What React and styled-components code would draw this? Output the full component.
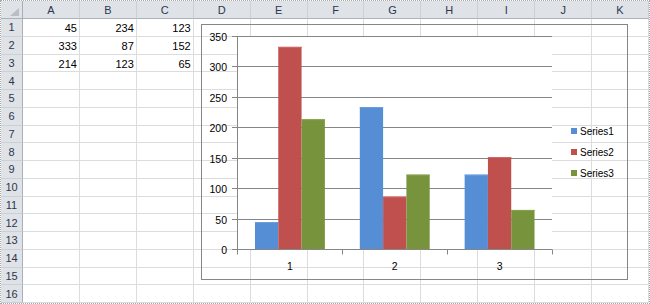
import React from "react";
import styled, { createGlobalStyle } from "styled-components";

const columns = ["A", "B", "C", "D", "E", "F", "G", "H", "I", "J", "K"];
const ROW_COUNT = 16;

// rows 1-3 of the sheet, columns A-C
const data = [
  [45, 234, 123],
  [333, 87, 152],
  [214, 123, 65],
];

const series = [
  { name: "Series1", color: "#558ED5", edge: "#6C9EDD" },
  { name: "Series2", color: "#C0504D", edge: "#CD6A67" },
  { name: "Series3", color: "#77933C", edge: "#87A34C" },
];

const plot = { left: 35.5, right: 350, top: 11.5, bottom: 224.5, max: 350 };
const ticks = [0, 50, 100, 150, 200, 250, 300, 350];
const yFor = (v) => plot.bottom - (v / plot.max) * (plot.bottom - plot.top);
const snap = (y) => Math.round(y - 0.5) + 0.5;

const GlobalStyle = createGlobalStyle`
  html, body {
    margin: 0;
    padding: 0;
    background: #ffffff;
  }
  body {
    font-family: "Liberation Sans", Arial, sans-serif;
  }
`;

const Sheet = styled.div`
  position: relative;
  box-sizing: border-box;
  width: 650px;
  height: 304px;
  border: 1px dotted #a8a8a8;
  display: grid;
  grid-template-columns: 22px repeat(${columns.length}, 1fr);
  grid-template-rows: 18px repeat(${ROW_COUNT}, 1fr);
  overflow: hidden;
  background: #ffffff;
  font-size: 11px;
`;

const HeaderBase = styled.div`
  box-sizing: border-box;
  background: #dfe3e8;
  color: #2c374c;
  display: flex;
  align-items: center;
  justify-content: center;
  line-height: 1;
`;

const Corner = styled(HeaderBase)`
  border-right: 1px solid #a9b0b8;
  border-bottom: 1px solid #a9b0b8;
  justify-content: flex-end;
  align-items: flex-end;
  padding: 0 3px 2px 0;
`;

const CornerMark = styled.span`
  width: 9px;
  height: 8px;
  background: #b9bec5;
  clip-path: polygon(100% 0, 100% 100%, 0 100%);
`;

const ColHeader = styled(HeaderBase)`
  border-right: 1px solid #cbd0d6;
  border-bottom: 1px solid #a9b0b8;
  padding-top: 1px;
`;

const RowHeader = styled(HeaderBase)`
  border-right: 1px solid #a9b0b8;
  border-bottom: 1px solid #cbd0d6;
  padding-top: 1px;
`;

const Cell = styled.div`
  box-sizing: border-box;
  border-right: 1px solid #dadcdd;
  border-bottom: 1px solid #dadcdd;
  display: flex;
  align-items: flex-end;
  justify-content: flex-end;
  padding: 0 2px 1px 0;
  color: #000000;
  line-height: 1.15;
`;

const ChartBox = styled.div`
  position: absolute;
  left: 200px;
  top: 23px;
  width: 427px;
  height: 256px;
  box-sizing: border-box;
  border: 1px solid #868686;
  display: flex;
  align-items: center;
`;

const PlotSvg = styled.svg`
  flex: none;
  display: block;
  align-self: stretch;
  font-family: "Liberation Sans", Arial, sans-serif;
  font-size: 10.5px;
`;

const Legend = styled.ul`
  list-style: none;
  margin: 0 0 0 9px;
  padding: 0;
  display: flex;
  flex-direction: column;
  gap: 8px;
  font-size: 10px;
  color: #000000;
`;

const LegendItem = styled.li`
  display: flex;
  align-items: center;
  gap: 3px;
  height: 13px;
`;

const Swatch = styled.span`
  width: 6px;
  height: 6px;
  background: ${(p) => p.$color};
`;

function Chart() {
  const catW = (plot.right - plot.left) / 3;
  const barW = catW / 4.5;

  return (
    <ChartBox>
      <PlotSvg width="360" height="254" viewBox="0 0 360 254">
        <rect
          x={plot.left}
          y={plot.top}
          width={plot.right - plot.left}
          height={plot.bottom - plot.top}
          fill="#ffffff"
        />
        {ticks.map((t) => {
          const y = snap(yFor(t));
          return (
            <g key={t}>
              <line x1={30} x2={plot.right} y1={y} y2={y} stroke="#868686" />
              <text x={25} y={y} textAnchor="end" dominantBaseline="central" fill="#000">
                {t}
              </text>
            </g>
          );
        })}
        {[0, 1, 2].map((c) =>
          series.map((s, si) => {
            const v = data[si][c];
            const x = plot.left + c * catW + 0.75 * barW + si * barW;
            const y = yFor(v);
            return (
              <g key={`${c}-${si}`}>
                <rect x={x} y={y} width={barW} height={plot.bottom - y} fill={s.color} />
                <rect x={x} y={y} width={barW} height={1} fill={s.edge} />
              </g>
            );
          })
        )}
        <line x1={plot.left} x2={plot.left} y1={plot.top} y2={plot.bottom} stroke="#868686" />
        <line x1={30} x2={plot.right} y1={plot.bottom} y2={plot.bottom} stroke="#868686" />
        {[0, 1, 2, 3].map((i) => {
          const x = snap(plot.left + i * catW);
          return (
            <line key={i} x1={x} x2={x} y1={plot.bottom} y2={plot.bottom + 5} stroke="#868686" />
          );
        })}
        {[0, 1, 2].map((c) => (
          <text
            key={c}
            x={plot.left + c * catW + catW / 2}
            y={241}
            textAnchor="middle"
            dominantBaseline="central"
            fill="#000"
          >
            {c + 1}
          </text>
        ))}
      </PlotSvg>
      <Legend>
        {series.map((s) => (
          <LegendItem key={s.name}>
            <Swatch $color={s.color} />
            {s.name}
          </LegendItem>
        ))}
      </Legend>
    </ChartBox>
  );
}

export default function App() {
  return (
    <>
      <GlobalStyle />
      <Sheet>
        <Corner>
          <CornerMark />
        </Corner>
        {columns.map((c) => (
          <ColHeader key={c}>{c}</ColHeader>
        ))}
        {Array.from({ length: ROW_COUNT }, (_, r) => (
          <React.Fragment key={r}>
            <RowHeader>{r + 1}</RowHeader>
            {columns.map((c, ci) => (
              <Cell key={c}>{r < data.length && ci < 3 ? data[r][ci] : ""}</Cell>
            ))}
          </React.Fragment>
        ))}
        <Chart />
      </Sheet>
    </>
  );
}
